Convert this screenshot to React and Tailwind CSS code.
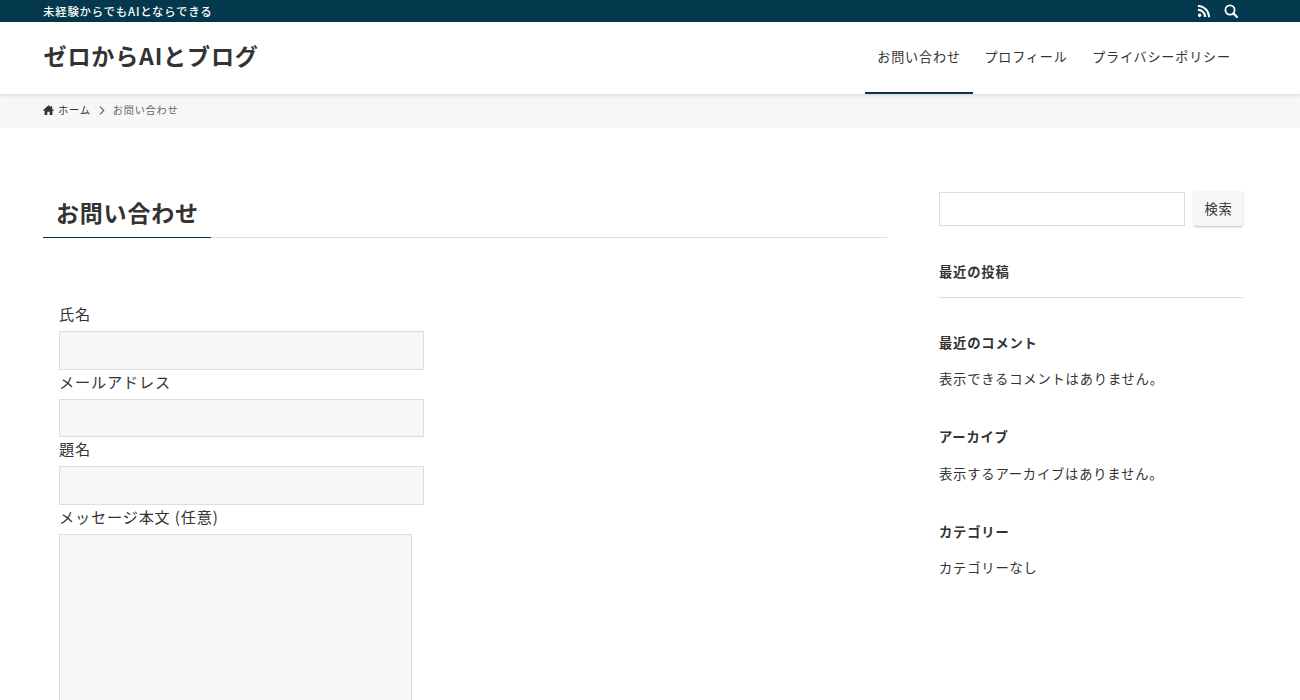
import React from "react";
import { FaRss } from "react-icons/fa";

const NavItem = ({ label, active, width }) => (
  <a
    className={
      "flex h-full items-center justify-center border-b-2 text-[13.1px] " +
      width +
      " " +
      (active ? "border-[#04384c]" : "border-transparent")
    }
  >
    {label}
  </a>
);

const Field = ({ label }) => (
  <div>
    <label className="block h-[29px] text-[15.2px] leading-[23px]">{label}</label>
    <input
      type="text"
      className="block h-[38.7px] w-[365px] border border-[#ddd] bg-[#f7f7f7] outline-none"
    />
  </div>
);

const Widget = ({ title, children }) => (
  <section className="pb-[34px]">
    <h2 className="text-[13.3px] leading-[24px] font-bold">{title}</h2>
    {children && <p className="mt-[12.5px] text-[13.3px] leading-[24px]">{children}</p>}
  </section>
);

const App = () => {
  return (
    <div className="h-[700px] overflow-hidden bg-white font-['Noto_Sans_CJK_JP','Noto_Sans',sans-serif] tracking-[0.05em] text-[#333]">
      {/* top bar */}
      <div className="flex h-[22px] items-center justify-between bg-[#04384c] pr-[62px] pl-[43px] text-white">
        <p className="text-[11.4px] leading-[20px] font-medium">未経験からでもAIとならできる</p>
        <div className="flex items-center gap-[13px]">
          <FaRss className="h-[14px] w-[14px]" />
          <svg viewBox="0 0 14 14" className="h-[14px] w-[14px]" fill="none" stroke="currentColor" strokeWidth="1.8">
            <circle cx="6" cy="6" r="4.6" />
            <path d="M9.4 9.4 13 13" strokeWidth="2.2" strokeLinecap="round" />
          </svg>
        </div>
      </div>

      {/* header */}
      <header className="relative z-10 flex h-[72px] items-center justify-between bg-white pr-[56px] pl-[43.5px] shadow-[0_1px_4px_rgba(0,0,0,0.15)]">
        <h1 className="pb-[6px] text-[23.1px] font-bold">ゼロからAIとブログ</h1>
        <nav className="flex h-full">
          <NavItem label="お問い合わせ" width="w-[108px]" active />
          <NavItem label="プロフィール" width="w-[106px]" />
          <NavItem label="プライバシーポリシー" width="w-[165px]" />
        </nav>
      </header>

      {/* breadcrumb */}
      <div className="flex h-[34px] items-center bg-[#f7f7f7] pb-[2px] pl-[43px] text-[10.2px]">
        <svg viewBox="0 0 12 11" className="mr-[4px] h-[10px] w-[11px]" fill="currentColor">
          <path d="M6 .3 0 5.8l.7.8 1-.9V11h3V7.3h2.6V11h3V5.7l1 .9.7-.8-2-1.8V1.2H8.4v1.3z" />
        </svg>
        <span>ホーム</span>
        <svg viewBox="0 0 6 9" className="mx-[8px] h-[9px] w-[6px]" fill="none" stroke="#666" strokeWidth="1.2">
          <path d="M1 .7 4.8 4.5 1 8.3" />
        </svg>
        <span className="text-[#666]">お問い合わせ</span>
      </div>

      <div className="flex justify-between pt-[64px] pr-[57px] pl-[43px]">
        {/* main */}
        <main className="w-[844px]">
          <div className="border-b border-[#ddd]">
            <h1 className="-mb-px inline-block border-b border-[#04384c] pr-[12px] pb-[5px] pl-[13px] text-[23px] leading-[40px] font-bold">
              お問い合わせ
            </h1>
          </div>
          <form className="mt-[64px] px-[16px]">
            <Field label="氏名" />
            <Field label="メールアドレス" />
            <Field label="題名" />
            <label className="block h-[29px] text-[15.2px] leading-[23px]">メッセージ本文 (任意)</label>
            <textarea className="block h-[300px] w-[353px] resize-none border border-[#ddd] bg-[#f7f7f7] outline-none" />
          </form>
        </main>

        {/* sidebar */}
        <aside className="-mt-px w-[304px]">
          <div className="flex items-start justify-between">
            <input type="text" className="mt-px h-[34px] w-[246px] border border-[#ddd] bg-white outline-none" />
            <button className="h-[35px] w-[49px] rounded-[2px] bg-[#f7f7f7] text-[13.3px] shadow-[0_1px_2px_rgba(0,0,0,0.25)]">
              検索
            </button>
          </div>
          <section className="mt-[34px] mb-[32.5px] border-b border-[#ddd] pb-[13px]">
            <h2 className="text-[13.3px] leading-[24px] font-bold">最近の投稿</h2>
          </section>
          <Widget title="最近のコメント">表示できるコメントはありません。</Widget>
          <Widget title="アーカイブ">表示するアーカイブはありません。</Widget>
          <Widget title="カテゴリー">カテゴリーなし</Widget>
        </aside>
      </div>
    </div>
  );
};

export default App;
